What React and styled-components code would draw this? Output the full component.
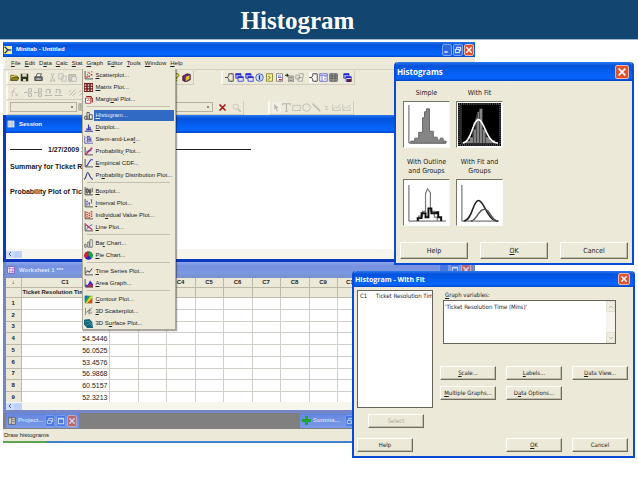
import React from "react";
import styled, { createGlobalStyle, css } from "styled-components";

const baseFont = `"Liberation Sans", Arial, sans-serif`;
const dialogFont = `"DejaVu Sans Condensed", "DejaVu Sans", sans-serif`;
const titleFont = `"Open Sans", "Noto Sans", sans-serif`;

const GlobalStyle = createGlobalStyle`
    * {
        box-sizing: border-box;
    }
    body {
        margin: 0;
        background: #fff;
        font-family: ${baseFont};
        font-size: 6px;
        line-height: 9px;
        color: #222;
    }
    button, select, textarea {
        font: inherit;
        color: inherit;
        margin: 0;
        padding: 0;
        border-radius: 0;
    }
    svg {
        display: block;
        flex: none;
    }
`;

const Slide = styled.main`
    position: relative;
    min-height: 100vh;
`;
const SlideHeader = styled.header`
    background: #12456f;
    border-bottom: 1px solid #9db8cc;
    height: 40px;
    padding-right: 43px;
    text-align: center;
    h1 {
        margin: 0;
        color: #fff;
        font: bold 25px/42px "Liberation Serif", "Times New Roman", serif;
    }
`;

/* main window */
const Window = styled.section`
    width: 74%;
    margin: 2px 0 0 3px;
    background: #ece9d8;
`;
const TitleBar = styled.div`
    display: flex;
    align-items: center;
    gap: 4px;
    height: ${(p) => p.$height || 15}px;
    padding: 0 1px;
    color: ${(p) => (p.$inactive ? "#dbe6fb" : "#fff")};
    background: ${(p) =>
        p.$inactive
            ? "linear-gradient(#8da9ee, #7690de 25%, #7b99e3 70%, #7a90c8)"
            : "linear-gradient(#2a78ee, #0352dc 20%, #0560f2 60%, #0566fc 85%, #0344c4)"};
    font-weight: bold;
    white-space: nowrap;
    > span {
        flex: 1;
    }
`;
const CaptionGroup = styled.div`
    display: flex;
    gap: 1px;
`;
const CaptionButton = styled.button`
    width: ${(p) => p.$size || 10}px;
    height: ${(p) => p.$size || 12}px;
    margin-right: ${(p) => (p.$size ? 2 : 0)}px;
    display: flex;
    align-items: center;
    justify-content: center;
    border: 1px solid ${(p) => (p.$close ? "#eeb6a8" : "#7ba3f3")};
    border-radius: 2px;
    background: ${(p) => (p.$close ? "#dd5433" : "#2f68e2")};
    opacity: ${(p) => (p.$dim ? 0.65 : 1)};
    flex: none;
`;
const MenuBar = styled.nav`
    display: flex;
    align-items: stretch;
    gap: 4px;
    height: 13px;
    padding-left: 6px;
    border-left: 2px solid #f6f4ea;
    border-bottom: 1px solid #d4d0bf;
`;
const MenuSlot = styled.div`
    position: relative;
    display: flex;
    align-items: center;
`;
const MenuButton = styled.button`
    border: 0;
    background: none;
    line-height: 12px;
`;
const Menu = styled.div`
    position: absolute;
    z-index: 2;
    top: 12px;
    left: -4px;
    width: 94px;
    padding-right: 1px;
    background: #ece9d8;
    border: 1px solid #aca899;
    border-top: 0;
    box-shadow: 1px 1px 1px rgba(0, 0, 0, 0.35);
`;
const MenuItem = styled.button`
    display: flex;
    align-items: center;
    width: 100%;
    height: 12px;
    border: 0;
    padding-left: 1px;
    background: none;
    text-align: left;
    white-space: nowrap;
    > span {
        flex: 1;
        margin-left: 1px;
        padding-left: 1px;
        line-height: 11px;
        ${(p) =>
            p.$selected &&
            css`
                background: #316ac5;
                color: #e4edfb;
            `}
    }
`;
const Separator = styled.hr`
    margin: 1px 4px 2px 4px;
    border: 0;
    border-top: 1px solid #c4c0b0;
`;

const ToolRow = styled.div`
    display: flex;
    align-items: center;
    height: 15px;
    padding-left: 3px;
`;
const ToolGroup = styled.div`
    display: flex;
    align-items: center;
    gap: 1px;
    height: 14px;
    margin-right: ${(p) => p.$after || 0}px;
    padding: 0 2px;
    border-left: 2px solid #f9f8f2;
    border-right: 1px solid #d2cebd;
    border-bottom: 1px solid #d2cebd;
`;
const ToolButton = styled.button`
    width: 9px;
    height: 11px;
    border: 0;
    background: ${(p) => (p.$pressed ? "#faf9f4" : "none")};
    margin-left: ${(p) => (p.$space ? 4 : 0)}px;
    opacity: ${(p) => (p.$off ? 0.45 : 1)};
    display: flex;
    align-items: center;
`;
const Combo = styled.select`
    appearance: none;
    width: ${(p) => p.$width}px;
    height: 10px;
    border: 1px solid #b5b1a0;
    background: linear-gradient(#8c8877, #8c8877) right 3px center / 2px 2px
        no-repeat #ece9d8;
`;

const Frame = styled.section`
    border: solid ${(p) => (p.$inactive ? "#7487c4" : "#0b38bd")};
    border-width: 0 3px 3px;
    background: #fff;
`;
const Output = styled.div`
    height: 116px;
    padding: 12px 4px;
    font-size: 7px;
    font-weight: bold;
    color: #1a1a1a;
    p {
        margin: 0;
        white-space: nowrap;
    }
    p + p {
        margin-top: 8px;
    }
    p + p + p {
        margin-top: 16px;
    }
`;
const Stamp = styled.p`
    display: flex;
    align-items: center;
    gap: 6px;
    &:before {
        content: "";
        width: 32px;
        height: 1px;
        background: #222;
    }
    &:after {
        content: "";
        width: 160px;
        height: 1px;
        background: #222;
    }
`;
const HScroll = styled.div`
    height: ${(p) => p.$height}px;
    background: #f6f5ee;
    display: flex;
    align-items: center;
    button {
        width: 8px;
        height: 7px;
        border: 0;
        border-radius: 1px;
        background: #cddcfb;
        display: flex;
        align-items: center;
        justify-content: center;
    }
    button + button {
        background: #bed1f8;
    }
`;

const Sheet = styled.div`
    height: 124px;
    overflow: hidden;
    table {
        width: 100%;
        height: 126px;
        table-layout: fixed;
        border-collapse: collapse;
    }
    th,
    td {
        padding: 0 1px;
        border-right: 1px solid #cfcfc8;
        border-bottom: 1px solid #cfcfc8;
        white-space: nowrap;
        overflow: hidden;
        text-align: center;
    }
    td {
        text-align: right;
        font-size: 7px;
    }
    th {
        background: #ece9d8;
        border-color: #bdb9a8;
    }
    th.name {
        text-align: left;
    }
`;

const Dock = styled.div`
    display: flex;
    height: 17px;
    padding: 0 0 1px 3px;
    background: #808080;
    border-bottom: 1px solid #ece9d8;
`;
const DockItem = styled.div`
    display: flex;
    align-items: center;
    gap: 2px;
    width: 73px;
    padding: 0 2px;
    margin-right: 221px;
    color: #c9dafb;
    background: linear-gradient(#6485dc, #7a9bea);
    font-weight: bold;
    > span {
        width: 30px;
    }
`;
const StatusBar = styled.footer`
    height: 13px;
    line-height: 11px;
    padding-left: 1px;
    border-bottom: 2px solid;
    border-image: linear-gradient(90deg, #5fa34c 9%, #3e7fd0 10%) 1;
`;

/* dialogs */
const Dialog = styled.section`
    position: absolute;
    z-index: 3;
    top: ${(p) => p.$top}px;
    right: ${(p) => p.$right}px;
    width: ${(p) => p.$width}px;
    background: #ece9d8;
    border: 1px solid #0a4bd6;
    border-width: 0 2px 2px;
    border-radius: 4px 4px 0 0;
    font: ${(p) => p.$size}px/9px ${dialogFont};
    ${TitleBar} {
        border-radius: 3px 3px 0 0;
        font-family: ${titleFont};
        font-size: ${(p) => p.$size + 1}px;
    }
`;
const GalleryBody = styled.div`
    padding: 8px 4px 4px;
`;
const Gallery = styled.div`
    display: grid;
    grid-template-columns: 47px 47px;
    column-gap: 6px;
    row-gap: 10px;
    padding: 0 3px;
    margin-bottom: 16px;
`;
const Choice = styled.button`
    display: flex;
    flex-direction: column;
    align-items: center;
    justify-content: flex-end;
    gap: 3px;
    border: 0;
    background: none;
    white-space: nowrap;
`;
const Thumb = styled.span`
    display: block;
    width: 47px;
    height: 47px;
    padding: 1px;
    border: 1px solid;
    border-color: #77756a #fbfaf5 #fbfaf5 #77756a;
    background: #fff;
`;
const ButtonRow = styled.div`
    display: grid;
    grid-template-columns: repeat(3, 1fr);
    gap: ${(p) => p.$gap}px;
`;
const PushButton = styled.button`
    height: ${(p) => p.$height || 14}px;
    min-width: 56px;
    border: 1px solid;
    border-color: #fdfcf7 #6f6c60 #6f6c60 #fdfcf7;
    box-shadow: inset -1px -1px 0 #c3bfae;
    background: #ece9d8;
    line-height: 10px;
    white-space: nowrap;
    &:disabled {
        color: #aca899;
    }
`;
const FitBody = styled.div`
    display: grid;
    grid-template-columns: 76px 1fr;
    column-gap: 7px;
    padding: 3px 6px 4px 3px;
`;
const VariableList = styled.select`
    appearance: none;
    display: block;
    width: 100%;
    height: 118px;
    padding: 1px;
    overflow: hidden;
    border: 1px solid #66645a;
    background: #fff;
    option {
        padding: 0 1px;
        white-space: pre;
        min-height: 8px;
    }
`;
const LeftButtons = styled.div`
    display: flex;
    flex-direction: column;
    align-items: flex-start;
    gap: 10px;
    padding-top: 6px;
    button:first-child {
        margin-left: 11px;
    }
`;
const RightSide = styled.div`
    display: flex;
    flex-direction: column;
    justify-content: space-between;
    label {
        display: block;
        padding-left: 5px;
        line-height: 10px;
    }
`;
const FieldBox = styled.div`
    display: flex;
    height: 44px;
    margin: 0 12px 22px 3px;
    border: 1px solid #66645a;
    background: #fff;
    textarea {
        flex: 1;
        border: 0;
        padding: 1px;
        resize: none;
        overflow: hidden;
        background: none;
        outline: 0;
    }
`;
const VScroll = styled.div`
    display: flex;
    flex-direction: column;
    justify-content: space-between;
    width: 9px;
    background: #f5f4ee;
    button {
        height: 11px;
        border: 1px solid #e4e1d4;
        background: #efede2;
        display: flex;
        align-items: center;
        justify-content: center;
    }
`;
const OptionGrid = styled.div`
    display: grid;
    grid-template-columns: repeat(3, 1fr);
    column-gap: 10px;
    row-gap: 6px;
`;

const Svg = ({ size = 9, children, ...rest }) => (
    <svg width={size} height={size} viewBox="0 0 12 12" fill="none" {...rest}>
        {children}
    </svg>
);

const axes = <path d="M1.5 0v10.5H12" stroke="#555" strokeWidth="1.3" />;
const sheets = (
    <>
        <path d="M1 1h7v6H1z" fill="#9aa2ff" stroke="#2a2ac8" />
        <path d="M4 5h7v6H4z" fill="#dfe2ff" stroke="#2a2ac8" />
        <path d="M1 1.5h7M4 5.5h7" stroke="#2a2ac8" strokeWidth="2" />
    </>
);
const page = <path d="M2 1h8v10H2z" fill="#fff" stroke="#666" />;

// every small drawing, on a 12 x 12 grid
const icons = {
    app: (
        <>
            <path d="M0 0h12v12H0z" fill="#f2f09a" />
            <path d="M1 1l5 5-5 5" stroke="#1c3c78" strokeWidth="2" />
            <path d="M6 6h5" stroke="#1c3c78" strokeWidth="2" />
        </>
    ),
    session: (
        <>
            <path d="M1 1h10v10H1z" fill="#fff" />
            <path d="M3 2v8M5 3h5M5 6h5M5 9h5" stroke="#3a66a8" />
        </>
    ),
    sheet: (
        <>
            <path d="M1 1h10v10H1z" fill="#fff" stroke="#6a2fb0" />
            <path d="M1 4h10M4 1v10M8 4v7M4 8h7" stroke="#b05ab8" />
        </>
    ),
    project: (
        <>
            <path d="M1 1h10v10H1z" fill="#dcd9c8" stroke="#444" />
            <path d="M5 1v10M6 4h4M6 7h4" stroke="#444" />
        </>
    ),
    plus: <path d="M4 0h4v4h4v4H8v4H4V8H0V4h4z" fill="#1fa336" />,
    min: <path d="M2 9h5" stroke="#fff" strokeWidth="2" />,
    restore: (
        <path d="M4 4V2h6v5H8M2 5h6v5H2z" stroke="#fff" strokeWidth="1.4" />
    ),
    max: <path d="M2 2h8v8H2zM2 3h8" stroke="#fff" strokeWidth="1.6" />,
    close: <path d="M2 2l8 8M10 2l-8 8" stroke="#fff" strokeWidth="2" />,
    left: <path d="M8 2L4 6l4 4" stroke="#4d6185" strokeWidth="2" />,
    up: <path d="M2 8l4-4 4 4" stroke="#c2bfb2" strokeWidth="2" />,
    down: <path d="M2 4l4 4 4-4" stroke="#c2bfb2" strokeWidth="2" />,
    scatter: (
        <>
            {axes}
            <path
                d="M3 8h2M4 5h1M6 7h2M7 3h1M9 5h2M10 1h1M5 2h1"
                stroke="#e02020"
                strokeWidth="2"
            />
        </>
    ),
    matrix: (
        <>
            <path d="M0 0h12v12H0z" fill="#6e1f1f" />
            <path
                d="M1 2.5h10M1 6h10M1 9.5h10"
                stroke="#f1d3cd"
                strokeWidth="2"
                strokeDasharray="2 2"
            />
        </>
    ),
    marginal: (
        <>
            <path d="M2 4h7v7H2z" fill="#fff" stroke="#a02020" />
            <path d="M3 2h6l2 3v5" stroke="#a02020" strokeWidth="1.6" />
            <path d="M4 8l2-2 1 2" stroke="#e02020" />
        </>
    ),
    histogram: (
        <path
            d="M1 11V7h3v4M4 11V2h3v9M7 11V5h4v6zM1 11h10"
            fill="#fff"
            stroke="#555"
            strokeWidth="1.3"
        />
    ),
    dotplot: (
        <path
            d="M1 11h11M4 9V7M6 9V2M8 9V5M3 9h7"
            stroke="#3a3aa8"
            strokeWidth="1.6"
        />
    ),
    stem: (
        <path
            d="M1 1v10h11M4 2h4M3 4h7M4 6h6M3 8h8M5 1v9M8 3v6"
            stroke="#4747b4"
        />
    ),
    probability: (
        <>
            {axes}
            <path d="M2 10l4-4 5-5" stroke="#c01a70" strokeWidth="2" />
            <path d="M3 6l3-1 4 0" stroke="#4040a0" />
        </>
    ),
    cdf: (
        <>
            {axes}
            <path d="M2 9h2l3-5 2-3h3" stroke="#3a3ab4" strokeWidth="1.5" />
        </>
    ),
    distribution: (
        <path
            d="M0 11c3 0 3-9 5-9s3 9 7 9"
            stroke="#3a3a9c"
            strokeWidth="1.5"
        />
    ),
    boxplot: (
        <>
            {axes}
            <path
                d="M4 1v9M3 3h3v4H3zM8 2v8M7 4h2v4H7zM11 1v6"
                stroke="#333"
            />
        </>
    ),
    interval: (
        <>
            {axes}
            <path d="M4 3v5M3 3h2M3 8h2M7 4v5M6 6h2M10 1v5M9 1h2" stroke="#3a3ab4" />
        </>
    ),
    individual: (
        <>
            {axes}
            <path
                d="M4 1v9M7 2v8M10 0v9"
                stroke="#e23a2a"
                strokeWidth="2"
                strokeDasharray="2 1"
            />
        </>
    ),
    line: (
        <>
            {axes}
            <path d="M2 2l5 4 4 3" stroke="#d02060" strokeWidth="1.6" />
            <path d="M3 9l3-4 5-3" stroke="#3a3ab4" />
        </>
    ),
    bar: (
        <path d="M1 11V7h2v4zM5 11V4h2v7zM8 11V1h3v10z" fill="#fff" stroke="#555" />
    ),
    pie: (
        <>
            <circle cx="6" cy="6" r="5.5" fill="#2424c0" />
            <path d="M6 6V.5A5.5 5.5 0 0 0 2 10z" fill="#d8202a" />
            <path d="M6 6V.5A5.5 5.5 0 0 1 10 10z" fill="#18a838" />
        </>
    ),
    series: (
        <>
            {axes}
            <path d="M2 8l3-3 2 2 4-5" stroke="#555" strokeWidth="1.4" />
        </>
    ),
    area: (
        <>
            <path d="M2 11V7l3 1 3-6 4 5v4z" fill="#2a2ac8" />
            <path d="M2 11l3-2 3-3 4 3v2z" fill="#c8204a" />
            {axes}
        </>
    ),
    contour: (
        <>
            <path d="M1 1h10v10H1z" fill="#1fa850" />
            <path d="M1 1h5L1 8z" fill="#1f66d0" />
            <path d="M11 4v7H4z" fill="#e8402a" />
            <path d="M8 2l3-1v3L4 11H2z" fill="#e6d428" />
        </>
    ),
    scatter3d: <path d="M2 1v10M2 8l9-7M5 5h5M5 8h6M7 2v8" stroke="#777" />,
    surface: (
        <>
            <path d="M0 1l7-1 4 4 1 8H4L0 7z" fill="#15657a" />
            <path d="M1 4l6-1 4 4M3 8l5-2 3 4" stroke="#49a3ae" />
        </>
    ),
    open: (
        <>
            <path d="M1 10V3h4l1 1h4v2" fill="#e7d53c" stroke="#5c5410" />
            <path d="M1 10l2-4h9l-2 4z" fill="#8c8420" stroke="#4a440c" />
        </>
    ),
    save: (
        <>
            <path d="M1 1h10v10H1z" fill="#303018" />
            <path d="M3 1h6v4H3zM4 8h4v3H4z" fill="#dcd9c8" />
        </>
    ),
    print: (
        <>
            <path d="M1 5h10v5H1z" fill="#777" stroke="#333" />
            <path d="M4 1h6L8 5H3z" fill="#fff" stroke="#333" />
            <path d="M3 8h6" stroke="#fff" />
        </>
    ),
    cut: <path d="M4 0l3 8M8 0L5 8M3 9h2v2H3zM7 9h2v2H7z" stroke="#777" />,
    copy: <path d="M1 1h6v7H1zM5 4h6v7H5z" fill="#eee" stroke="#777" />,
    paste: (
        <>
            <path d="M1 2h9v9H1z" fill="#999" stroke="#666" />
            <path d="M5 5h6v6H5z" fill="#eee" stroke="#777" />
        </>
    ),
    help: (
        <path
            d="M4 3c0-3 5-2 5 0S6 5 6 8M6 9v2"
            stroke="#a89c10"
            strokeWidth="2"
        />
    ),
    book: (
        <>
            <path d="M1 4l6-3 4 1v7l-6 3-4-2z" fill="#6b2468" stroke="#3c1238" />
            <path d="M5 5v6l5-3V3z" fill="#d8c828" />
        </>
    ),
    fx: <path d="M7 1C4 1 4 5 3 11M2 5h4M7 7l4 4M11 7l-4 4" stroke="#777" />,
    cell: (
        <path
            d="M0 6h5M6 1h4v4H6zM6 7h4v4H6z"
            stroke="#777"
            strokeWidth="1.3"
        />
    ),
    cells: (
        <path
            d="M1 10h10M3 7V2M3 2h5v4M8 8V3"
            stroke="#777"
            strokeWidth="1.3"
        />
    ),
    brush: (
        <path
            d="M2 10l8-8M1 6l3-3M6 10l5-4"
            stroke="#777"
            strokeWidth="1.3"
        />
    ),
    bracket: (
        <path
            d="M0 6h4M9 1H5v3l-2 2 2 2v3h4M8 1h3v10H8"
            stroke="#444"
            strokeWidth="1.2"
        />
    ),
    sheets,
    info: (
        <>
            <circle cx="6" cy="6" r="5" fill="#d5e4ff" stroke="#2038a8" />
            <path d="M6 3v6" stroke="#2038a8" strokeWidth="2" />
        </>
    ),
    report: (
        <>
            <path d="M2 1h8v10H2z" fill="#f2ee8c" stroke="#77711a" />
            <path d="M4 4l3 2-3 3" stroke="#444" />
        </>
    ),
    graphpage: (
        <>
            {page}
            <path d="M4 4h4M4 6h5" stroke="#4444c0" />
            <path d="M5 9h4" stroke="#d03030" strokeWidth="2" />
        </>
    ),
    list: (
        <>
            <path d="M0 3h5M3 1v4" stroke="#222" strokeWidth="1.6" />
            <path d="M5 4h6v8H5zM6 6h4M6 8h4M6 10h4" stroke="#666" />
        </>
    ),
    linked: <path d="M1 3h5v5H1zM5 1h6v5M4 6h6v5H4z" stroke="#999" />,
    grid: (
        <>
            <path d="M1 1h10v10H1z" fill="#fff" stroke="#5252c8" />
            <path d="M1 3h10M4 3v8M7 5h3M7 8h3" stroke="#5252c8" />
        </>
    ),
    table: (
        <>
            <path d="M1 1h10v10H1z" fill="#aaa" stroke="#444" />
            <path d="M1 4h10M1 7h10M4 1v10M8 1v10" stroke="#444" />
        </>
    ),
    manager: (
        <>
            {sheets}
            <path d="M5 8h6v4H5z" fill="#5a2048" />
        </>
    ),
    redx: <path d="M2 2l8 8M10 2l-8 8" stroke="#b01818" strokeWidth="2.2" />,
    zoom: (
        <>
            <circle cx="5" cy="5" r="3.5" stroke="#888" />
            <path d="M8 8l4 4" stroke="#888" strokeWidth="2" />
        </>
    ),
    arrow: <path d="M3 1l6 6H6l2 4-2 0-1-4-2 2z" fill="#777" />,
    text: <path d="M1 3V1h10v2M6 1v10M4 11h4" stroke="#777" strokeWidth="1.4" />,
    rect: <path d="M1 3h10v7H1z" stroke="#777" />,
    circle: <circle cx="6" cy="6" r="5" stroke="#777" />,
    diag: <path d="M1 1l10 10" stroke="#777" strokeWidth="1.6" />,
    dot: <path d="M4 5h4M4 8h4" stroke="#777" />,
    poly: <path d="M1 2v8h10V6M1 9l4-4 2 2 4-5" stroke="#888" />,
};

const Icon = ({ name, size }) => (
    <Svg size={size} aria-hidden="true">
        {icons[name]}
    </Svg>
);

// "&" marks the access key that follows it
const Key = ({ text }) => {
    const [before, rest] = text.split("&");
    if (!rest) return text;
    return (
        <>
            {before}
            <u>{rest[0]}</u>
            {rest.slice(1)}
        </>
    );
};

const menuNames = [
    "&File",
    "&Edit",
    "D&ata",
    "&Calc",
    "&Stat",
    "&Graph",
    "E&ditor",
    "&Tools",
    "&Window",
    "&Help",
];

const graphMenu = [
    ["scatter", "&Scatterplot..."],
    ["matrix", "&Matrix Plot..."],
    ["marginal", "Margi&nal Plot..."],
    null,
    ["histogram", "&Histogram..."],
    ["dotplot", "&Dotplot..."],
    ["stem", "Stem-and-Lea&f..."],
    ["probability", "Probabilit&y Plot..."],
    ["cdf", "&Empirical CDF..."],
    ["distribution", "Pr&obability Distribution Plot..."],
    null,
    ["boxplot", "&Boxplot..."],
    ["interval", "&Interval Plot..."],
    ["individual", "Indi&vidual Value Plot..."],
    ["line", "&Line Plot..."],
    null,
    ["bar", "Ba&r Chart..."],
    ["pie", "&Pie Chart..."],
    null,
    ["series", "&Time Series Plot..."],
    ["area", "&Area Graph..."],
    null,
    ["contour", "&Contour Plot..."],
    ["scatter3d", "&3D Scatterplot..."],
    ["surface", "3D S&urface Plot..."],
];

const values = [
    "",
    "",
    "55.0001",
    "54.5446",
    "56.0525",
    "53.4576",
    "56.9868",
    "60.5157",
    "52.3213",
];
const columns = ["", "", "C4", "C5", "C6", "C7", "C8", "C9", "C10", "", "", ""];

const Tools = ({ names, off, after, pressed, spaced = [] }) => (
    <ToolGroup $after={after}>
        {names.map((name, i) => (
            <ToolButton
                key={i}
                type="button"
                aria-label={name}
                $off={off === true || (off && off.includes(name))}
                $space={spaced.includes(i)}
                $pressed={pressed === i}
            >
                <Icon name={name} size={9} />
            </ToolButton>
        ))}
    </ToolGroup>
);

const Captions = ({ names, dim }) => (
    <CaptionGroup>
        {names.map((name) => (
            <CaptionButton
                key={name}
                type="button"
                aria-label={name}
                $close={name === "close"}
                $dim={dim}
            >
                <Icon name={name} size={8} />
            </CaptionButton>
        ))}
    </CaptionGroup>
);

const ScrollLeft = ({ height }) => (
    <HScroll $height={height}>
        <button type="button" aria-label="scroll left">
            <Icon name="left" size={6} />
        </button>
        <button type="button" aria-label="scroll thumb" />
    </HScroll>
);

const GraphMenu = () => (
    <Menu role="menu">
        {graphMenu.map((item, i) =>
            item ? (
                <MenuItem
                    key={i}
                    type="button"
                    role="menuitem"
                    $selected={item[0] === "histogram"}
                >
                    <Icon name={item[0]} size={9} />
                    <span>
                        <Key text={item[1]} />
                    </span>
                </MenuItem>
            ) : (
                <Separator key={i} />
            )
        )}
    </Menu>
);

const Worksheet = () => (
    <Sheet>
        <table>
            <colgroup>
                <col style={{ width: 15 }} />
                <col style={{ width: 88 }} />
                {columns.map((c, i) => (
                    <col
                        key={i}
                        style={{
                            width:
                                i === columns.length - 1
                                    ? undefined
                                    : 29 - (i % 2),
                        }}
                    />
                ))}
            </colgroup>
            <thead>
                <tr>
                    <th>↓</th>
                    <th>C1</th>
                    {columns.map((c, i) => (
                        <th key={i}>{c}</th>
                    ))}
                </tr>
                <tr>
                    <th />
                    <th className="name">Ticket Resolution Tim</th>
                    {columns.map((c, i) => (
                        <th key={i} />
                    ))}
                </tr>
            </thead>
            <tbody>
                {values.map((value, row) => (
                    <tr key={row}>
                        <th>{row + 1}</th>
                        <td>{value}</td>
                        {columns.map((c, i) => (
                            <td key={i} />
                        ))}
                    </tr>
                ))}
            </tbody>
        </table>
    </Sheet>
);

const charts = {
    simple: (
        <>
            <path d="M4 2v39h38" stroke="#555" />
            <path
                d="M6 41v-2h4v-3h4v-6h4V15h2V9h2V6h3v23h4v6h4v3h3v-2h3v3h3v2z"
                fill="#858585"
                stroke="#666"
            />
        </>
    ),
    fit: (
        <>
            <path d="M0 0h44v44H0z" fill="#000" />
            <path d="M1 1h42v42H1z" stroke="#aaa" strokeDasharray="1 1" />
            <path d="M3 2v39h38" stroke="#555" />
            <path
                d="M8 41v-2h4v-4h3v-8h3V15h2V9h2V6h3v21h4v8h4v3h5v3z"
                fill="#858585"
            />
            <path
                d="M16 41V20M19 41V12M22 41V7M25 41V26M28 41V30"
                stroke="#444"
            />
            <path
                d="M5 41c9-1 10-24 16-24s8 24 20 24"
                stroke="#fff"
                strokeWidth="1.6"
            />
        </>
    ),
    outline: (
        <>
            <path d="M4 4v37h38" stroke="#555" />
            <path
                d="M14 41v-5h4v-5h3V13l2-5 3 4v19h4v6h3v4"
                stroke="#777"
                strokeWidth="1.2"
            />
            <path
                d="M13 41v-3h4v-5h4v4h3v-9h3v5h5v-1h2v5h3v4"
                stroke="#111"
                strokeWidth="2"
            />
        </>
    ),
    groups: (
        <>
            <path d="M4 4v37h38" stroke="#555" />
            <path
                d="M6 41c9-1 9-21 15-21s9 21 20 21"
                stroke="#222"
                strokeWidth="1.6"
            />
            <path
                d="M13 41c6 0 8-12 14-12s7 12 14 12"
                stroke="#555"
                strokeWidth="1.5"
            />
        </>
    ),
};

const choices = [
    ["simple", ["Simple"]],
    ["fit", ["With Fit"]],
    ["outline", ["With Outline", "and Groups"]],
    ["groups", ["With Fit and", "Groups"]],
];

const HistogramsDialog = () => (
    <Dialog $top={62} $right={4} $width={240} $size={7} role="dialog">
        <TitleBar $height={19}>
            <span>Histograms</span>
            <CaptionButton type="button" aria-label="close" $close $size={14}>
                <Icon name="close" size={10} />
            </CaptionButton>
        </TitleBar>
        <GalleryBody>
            <Gallery>
                {choices.map(([name, lines]) => (
                    <Choice key={name} type="button">
                        <span>
                            {lines.map((line) => (
                                <React.Fragment key={line}>
                                    {line}
                                    <br />
                                </React.Fragment>
                            ))}
                        </span>
                        <Thumb>
                            <svg
                                width="43"
                                height="43"
                                viewBox="0 0 44 44"
                                fill="none"
                            >
                                {charts[name]}
                            </svg>
                        </Thumb>
                    </Choice>
                ))}
            </Gallery>
            <ButtonRow $gap={12}>
                {["Help", "&OK", "Cancel"].map((text) => (
                    <PushButton key={text} type="button" $height={17}>
                        <Key text={text} />
                    </PushButton>
                ))}
            </ButtonRow>
        </GalleryBody>
    </Dialog>
);

const WithFitDialog = () => (
    <Dialog $top={271} $right={3} $width={283} $size={6} role="dialog">
        <TitleBar $height={16}>
            <span>Histogram - With Fit</span>
            <CaptionButton type="button" aria-label="close" $close $size={12}>
                <Icon name="close" size={8} />
            </CaptionButton>
        </TitleBar>
        <FitBody>
            <div>
                <VariableList size={10} aria-label="Variables">
                    <option>
                        {"C1\u00a0\u00a0\u00a0\u00a0\u00a0Ticket Resolution Tim"}
                    </option>
                </VariableList>
                <LeftButtons>
                    <PushButton type="button" disabled>
                        Select
                    </PushButton>
                    <PushButton type="button">Help</PushButton>
                </LeftButtons>
            </div>
            <RightSide>
                <div>
                    <label htmlFor="graph-variables">
                        <Key text="&Graph variables:" />
                    </label>
                    <FieldBox>
                        <textarea
                            id="graph-variables"
                            defaultValue="'Ticket Resolution Time (Mins)'"
                        />
                        <VScroll>
                            <button type="button" aria-label="scroll up">
                                <Icon name="up" size={6} />
                            </button>
                            <button type="button" aria-label="scroll down">
                                <Icon name="down" size={6} />
                            </button>
                        </VScroll>
                    </FieldBox>
                    <OptionGrid>
                        {[
                            "&Scale...",
                            "&Labels...",
                            "&Data View...",
                            "&Multiple Graphs...",
                            "D&ata Options...",
                        ].map((text) => (
                            <PushButton key={text} type="button">
                                <Key text={text} />
                            </PushButton>
                        ))}
                    </OptionGrid>
                </div>
                <ButtonRow $gap={10}>
                    <span />
                    <PushButton type="button">
                        <Key text="&OK" />
                    </PushButton>
                    <PushButton type="button">Cancel</PushButton>
                </ButtonRow>
            </RightSide>
        </FitBody>
    </Dialog>
);

const App = () => {
    return (
        <Slide>
            <GlobalStyle />
            <SlideHeader>
                <h1>Histogram</h1>
            </SlideHeader>
            <Window>
                <TitleBar>
                    <Icon name="app" size={8} />
                    <span>Minitab - Untitled</span>
                    <Captions names={["min", "restore", "close"]} />
                </TitleBar>
                <MenuBar>
                    {menuNames.map((name) => (
                        <MenuSlot key={name}>
                            <MenuButton type="button">
                                <Key text={name} />
                            </MenuButton>
                            {name === "&Graph" && <GraphMenu />}
                        </MenuSlot>
                    ))}
                </MenuBar>
                <ToolRow>
                    <Tools
                        names={["open", "save", "print", "cut", "copy", "paste", "cell", "cell", "cell", "cell", "list", "zoom", "list", "zoom", "info", "help", "book"]}
                        off={["cut", "copy", "paste", "cell"]}
                        spaced={[2, 3, 6]}
                        after={27}
                    />
                    <Tools
                        names={["bracket", "sheets", "sheets", "info", "report", "graphpage", "list", "linked", "bracket", "grid", "table", "manager"]}
                        spaced={[8, 11]}
                        pressed={8}
                    />
                </ToolRow>
                <ToolRow>
                    <Tools
                        names={["fx", "cell", "cell", "cells", "cells", "brush", "brush", "brush"]}
                        off
                        spaced={[1, 5]}
                    />
                </ToolRow>
                <ToolRow>
                    <ToolGroup $after={24}>
                        <Combo $width={67} aria-label="Item" />
                        <ToolButton type="button" aria-label="edit" $off>
                            <Icon name="table" size={8} />
                        </ToolButton>
                        <Combo $width={125} aria-label="Attribute" />
                        <ToolButton type="button" aria-label="delete" $space>
                            <Icon name="redx" size={9} />
                        </ToolButton>
                        <ToolButton type="button" aria-label="zoom" $space $off>
                            <Icon name="zoom" size={9} />
                        </ToolButton>
                    </ToolGroup>
                    <Tools
                        names={["arrow", "text", "rect", "circle", "diag", "dot", "poly", "poly"]}
                        off
                        pressed={0}
                    />
                </ToolRow>

                <Frame>
                    <TitleBar $height={18}>
                        <Icon name="session" size={8} />
                        <span>Session</span>
                    </TitleBar>
                    <Output>
                        <Stamp>1/27/2009 1</Stamp>
                        <p>Summary for Ticket Re</p>
                        <p>Probability Plot of Tick</p>
                    </Output>
                    <ScrollLeft height={10} />
                </Frame>

                <Frame $inactive>
                    <TitleBar $height={16} $inactive>
                        <Icon name="sheet" size={8} />
                        <span>Worksheet 1 ***</span>
                        <Captions names={["min", "max", "close"]} dim />
                    </TitleBar>
                    <Worksheet />
                    <ScrollLeft height={8} />
                </Frame>

                <Dock>
                    <DockItem>
                        <Icon name="project" size={8} />
                        <span>Project...</span>
                        <Captions names={["restore", "max", "close"]} dim />
                    </DockItem>
                    <DockItem>
                        <Icon name="plus" size={9} />
                        <span>Summa...</span>
                        <Captions names={["restore"]} dim />
                    </DockItem>
                </Dock>
                <StatusBar>Draw histograms</StatusBar>
            </Window>

            <HistogramsDialog />
            <WithFitDialog />
        </Slide>
    );
};

export default App;
